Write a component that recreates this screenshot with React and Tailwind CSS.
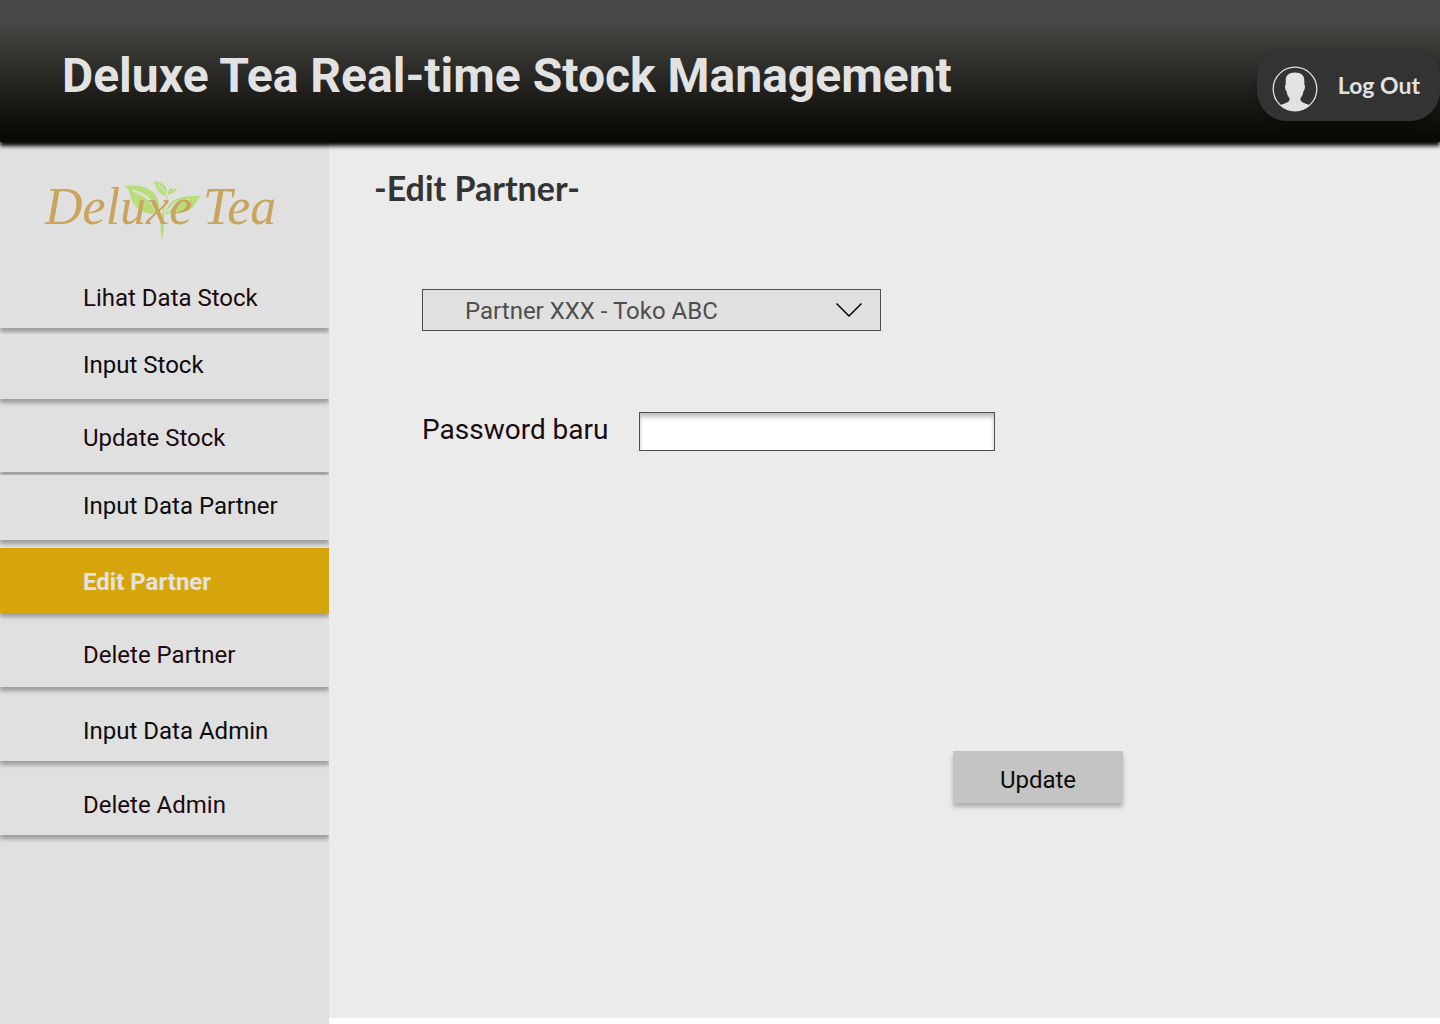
const navItems = [
  { label: "Lihat Data Stock", spacing: "mt-0", align: "pt-1", tone: "text-[#1b0a10]" },
  { label: "Input Stock", spacing: "mt-[6px]", align: "pb-1", tone: "text-[#0c0c0c]" },
  { label: "Update Stock", spacing: "mt-2", align: "pb-1", tone: "text-[#1b0a10]" },
  { label: "Input Data Partner", spacing: "mt-[3px]", align: "pb-1", tone: "text-[#0c0c0c]" },
  { label: "Edit Partner", spacing: "mt-2", align: "pt-0.5", active: true },
  { label: "Delete Partner", spacing: "mt-[9px]", align: "", tone: "text-[#1b0a10]" },
  { label: "Input Data Admin", spacing: "mt-[9px]", align: "pt-1", tone: "text-[#0c0c0c]" },
  { label: "Delete Admin", spacing: "mt-[9px]", align: "pt-1", tone: "text-[#1b0a10]" },
];

function Avatar() {
  return (
    <svg viewBox="0 0 46 46" className="size-[46px] shrink-0" aria-hidden="true">
      <defs>
        <clipPath id="avatar-clip">
          <circle cx="23" cy="23" r="22" />
        </clipPath>
      </defs>
      <path
        clipPath="url(#avatar-clip)"
        fill="#e2e2e2"
        d="M23 6.500c-6.500 0-9.300 3-9.300 8v4c-.9.500-.8 2.300-.4 4 .3 1.500.6 2.300 1.200 2.700.4 3 1.500 5.200 3 7v2c-1 2.500-5.500 3-10.500 5.800V46h32v-6c-5-2.800-9.500-3.300-10.500-5.800v-2c1.500-1.800 2.600-4 3-7 .6-.4.9-1.200 1.200-2.700.4-1.700.5-3.500-.4-4v-4c0-5-2.800-8-9.300-8z"
      />
      <circle cx="23" cy="23" r="21.800" fill="none" stroke="#e2e2e2" strokeWidth="1.300" />
    </svg>
  );
}

function Logo() {
  return (
    <svg viewBox="0 -10 250 84" className="h-[84px] w-[250px]" role="img" aria-label="Deluxe Tea">
      <g fill="#b7de78">
        <path d="M85 7c14-2 26 1 31 10 5 8 3 16 0 18-10 0-17-3-23-11-4-7-2-12-8-17z" />
        <path d="M126 36c1-15 12-20 35-19-6 5-6 13-15 15-8 1-13-1-20 4z" />
        <path d="M114 2c8 1 14 4 13 15-7-1-11-6-13-15z" />
        <path d="M128 14c0-2 1-4 3-5 1 1 1 1 2 2 1-1 2-2 4-2-1 4-5 6-9 7z" />
        <path d="M127 16c2 4-1 8-2 12-1 6-1 14-1 20 0 5-1 9-2 13-2-7-2-17 0-25 1-7 5-12 5-20z" />
      </g>
      <g fill="none" stroke="#e0e0e0" strokeLinecap="round">
        <path d="M94 12c13 4 20 11 23 22" strokeWidth="2.500" />
        <path d="M118 6c4 2 7 6 9 10" strokeWidth="1.200" />
        <path d="M128 32c5-8 12-11 21-11" strokeWidth="2.200" />
      </g>
      <g
        fill="#c9a45c"
        fontFamily="'Liberation Serif', serif"
        fontStyle="italic"
        fontSize="52"
      >
        <text x="5" y="45">Deluxe</text>
        <text x="163" y="45">Tea</text>
      </g>
    </svg>
  );
}

export default function App() {
  return (
    <div className="flex min-h-screen flex-col bg-white font-['Roboto',sans-serif] text-2xl">
      <header className="relative flex h-[142px] items-center justify-between bg-linear-to-b from-[#484846] from-15% to-[#0a0906] to-95% pl-[62px] shadow-[0_4px_4px_#0a0906]">
        <h1 className="pt-[10px] text-5xl font-bold text-[#e2e2e2]">
          Deluxe Tea Real-time Stock Management
        </h1>
        <button
          type="button"
          className="mt-[26px] flex h-[74px] items-center gap-5 rounded-[30px] bg-[#333333] pt-0.5 pr-5 pl-[15px] shadow-[0_4px_4px_rgba(0,0,0,0.25)]"
        >
          <span className="pt-2">
            <Avatar />
          </span>
          <span className="font-['Lato',sans-serif] text-[23px] font-bold whitespace-nowrap text-[#e2e2e2]">
            Log Out
          </span>
        </button>
      </header>

      <div className="flex flex-1">
        <aside className="w-[329px] shrink-0 overflow-x-clip bg-[#e0e0e0]">
          <div className="flex h-[121px] pt-[27px] pl-10">
            <Logo />
          </div>
          <nav>
            <ul>
              {navItems.map((item) => (
                <li key={item.label} className={item.spacing}>
                  <a
                    href="#"
                    aria-current={item.active ? "page" : undefined}
                    className={`relative flex h-[65px] items-center pl-[83px] shadow-[0_4px_4px_rgba(0,0,0,0.3)] ${item.align} ${
                      item.active
                        ? "bg-[#d6a50c] font-bold text-[#e2e2e2]"
                        : `bg-[#e0e0e0] ${item.tone}`
                    }`}
                  >
                    {item.label}
                  </a>
                </li>
              ))}
            </ul>
          </nav>
        </aside>

        <main className="mt-1 mb-[6px] flex-1 bg-[#ebebeb] px-[45px] pt-5">
          <h2 className="font-['Lato',sans-serif] text-[34px] leading-11 font-bold text-[#333333]">
            -Edit Partner-
          </h2>
          <form className="mt-[79px] ml-12 flex max-w-[701px] flex-col">
            <div className="relative w-[459px]">
              <select
                aria-label="Partner"
                className="block h-[42px] w-full appearance-none rounded-none border border-[#4f4f4f] bg-[#e0e0e0] pt-0.5 pl-[42px] text-[#4f4f4f]"
              >
                <option>Partner XXX - Toko ABC</option>
              </select>
              <svg
                viewBox="0 0 26 14"
                className="pointer-events-none absolute top-[14px] right-[19px] h-[14px] w-[26px]"
                fill="none"
                stroke="#000"
                strokeWidth="1.500"
                aria-hidden="true"
              >
                <path d="M.5.5 13 13 25.500.5" />
              </svg>
            </div>
            <div className="mt-[81px] flex items-center gap-[30px]">
              <label htmlFor="password" className="pb-1 text-[28px] leading-8 text-[#1b0a10]">
                Password baru
              </label>
              <input
                id="password"
                type="password"
                className="h-[39px] w-[356px] border border-[#4f4f4f] bg-white px-3 shadow-[inset_0_4px_4px_rgba(0,0,0,0.25)]"
              />
            </div>
            <button
              type="button"
              className="mt-[300px] h-[52px] w-[170px] self-end bg-[#c4c4c4] pt-[6px] text-[#0c0c0c] shadow-[0_4px_4px_rgba(0,0,0,0.25)]"
            >
              Update
            </button>
          </form>
        </main>
      </div>
    </div>
  );
}
